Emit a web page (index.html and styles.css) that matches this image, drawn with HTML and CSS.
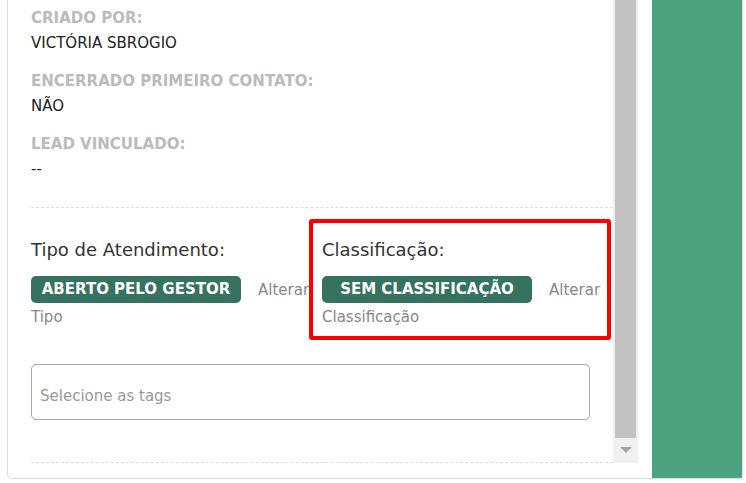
FILE: index.html
```html
<!DOCTYPE html>
<html lang="pt-BR">
<head>
  <meta charset="UTF-8">
  <title>Atendimento</title>
  <link rel="stylesheet" href="styles.css">
</head>
<body>
  <div class="card">
    <div class="main">
      <div class="scroller">
        <div class="content">

          <section class="info">
            <div class="field">
              <div class="label">Criado por:</div>
              <div class="value">VICTÓRIA SBROGIO</div>
            </div>
            <div class="field">
              <div class="label">Encerrado primeiro contato:</div>
              <div class="value">NÃO</div>
            </div>
            <div class="field">
              <div class="label">Lead vinculado:</div>
              <div class="value">--</div>
            </div>
          </section>

          <section class="types">
            <div class="type-col">
              <h3>Tipo de Atendimento:</h3>
              <div class="badge-row">
                <span class="badge">ABERTO PELO GESTOR</span>
                <a class="change">Alterar</a>
              </div>
              <div class="hint">Tipo</div>
            </div>
            <div class="type-col highlighted">
              <h3>Classificação:</h3>
              <div class="badge-row">
                <span class="badge">SEM CLASSIFICAÇÃO</span>
                <a class="change">Alterar</a>
              </div>
              <div class="hint">Classificação</div>
              <div class="mark"></div>
            </div>
          </section>

          <section class="tags">
            <input type="text" placeholder="Selecione as tags">
          </section>

        </div>
        <div class="scrollbar">
          <div class="thumb"></div>
          <div class="arrow"></div>
        </div>
      </div>
    </div>
    <div class="side"></div>
  </div>
</body>
</html>
```

FILE: styles.css
```css
body {
  margin: 0;
  background-color: #fff;
  font-family: "DejaVu Sans", Verdana, sans-serif;
  font-size: 15px;
  color: #222;
  overflow: hidden;
}

.card {
  display: flex;
  box-sizing: border-box;
  width: 736px;
  height: 479px;
  margin-left: 7px;
  border: 1px solid #ddd;
  border-top: none;
  border-radius: 0 0 5px 5px;
}

.main {
  width: 630px;
}

.scroller {
  display: flex;
  height: 463px;
  overflow: hidden;
}

.content {
  flex: 1;
  padding-left: 23px;
}

/* info fields */
.info {
  padding: 8px 0 10px;
  border-bottom: 1px dashed #ddd;
}
.field {
  margin-bottom: 18px;
}
.label {
  font-weight: bold;
  text-transform: uppercase;
  color: #bbb;
  line-height: 20px;
  margin-bottom: 5px;
}
.value {
  line-height: 20px;
}

/* tipo / classificação */
.types {
  display: grid;
  grid-template-columns: 1fr 1fr;
  padding-top: 30px;
}
.type-col {
  position: relative;
}
.type-col h3 {
  font-size: 18px;
  font-weight: normal;
  line-height: 24px;
  color: #333;
  margin: 0 0 14px;
}
.badge-row {
  display: flex;
  align-items: center;
}
.badge {
  width: 210px;
  height: 27px;
  line-height: 27px;
  text-align: center;
  border-radius: 5px;
  background-color: #35725f;
  color: #fff;
  font-weight: bold;
}
.change {
  margin-left: 17px;
  color: #888;
  cursor: pointer;
}
.hint {
  margin-top: 4px;
  line-height: 20px;
  color: #888;
}
.mark {
  position: absolute;
  top: -19px;
  left: -13px;
  right: 2px;
  height: 121px;
  box-sizing: border-box;
  border: 4px solid #f00;
  border-radius: 3px;
}

/* tags */
.tags {
  padding: 37px 23px 42px 0;
  border-bottom: 1px dashed #ddd;
}
.tags input {
  display: block;
  box-sizing: border-box;
  width: 100%;
  height: 56px;
  padding: 8px 8px 0;
  border: 1px solid #aaa;
  border-radius: 5px;
  font-family: inherit;
  font-size: 15px;
  outline: none;
}
.tags input::placeholder {
  color: #999;
}

/* fake scrollbar */
.scrollbar {
  display: flex;
  flex-direction: column;
  width: 25px;
  background-color: #f0f0f0;
}
.thumb {
  flex: 1;
  margin: 0 2px;
  background-color: #c1c1c1;
}
.arrow {
  height: 25px;
  position: relative;
}
.arrow::after {
  content: "";
  position: absolute;
  left: 7px;
  top: 9px;
  border-left: 6px solid transparent;
  border-right: 6px solid transparent;
  border-top: 6px solid #a3a3a3;
}

.side {
  width: 90px;
  margin-left: 14px;
  background-color: #4ca27e;
}
```
